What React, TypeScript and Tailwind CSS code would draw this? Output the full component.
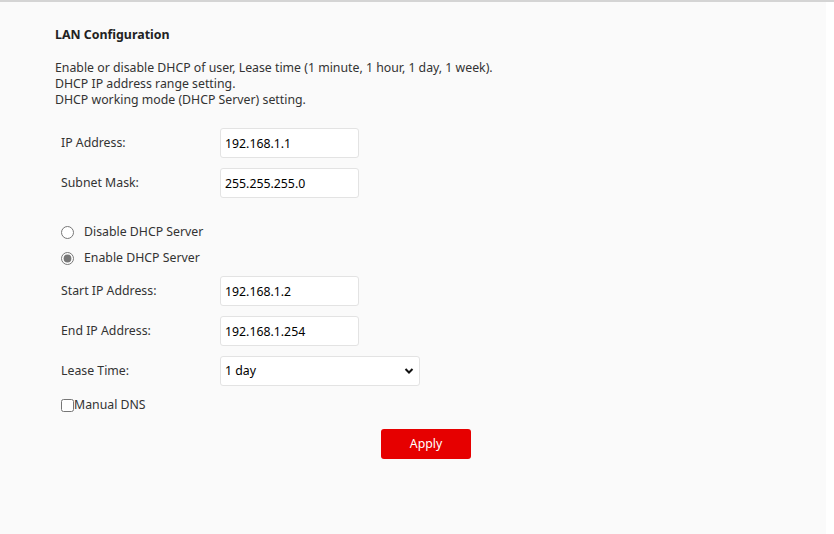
import { useState } from 'react';

const fieldClass =
  "w-[139px] h-[30px] px-[4px] bg-white border border-[#e3e3e3] rounded-[3px] text-[12.3px] text-black outline-none";

const Row = ({ label, value }: { label: string; value: string }) => (
  <div className="flex items-center h-[30px]">
    <span className="w-[165px] pl-[6px] text-[12.3px] text-[#333]">{label}</span>
    <input className={fieldClass} defaultValue={value} />
  </div>
);

export default function App() {
  const [dhcp, setDhcp] = useState<'off' | 'on'>('on');
  const [lease, setLease] = useState('1 day');

  return (
    <div className="w-[834px] h-[534px] bg-white border-t-2 border-[#d4d4d4]" style={{ fontFamily: '"Noto Sans", "Open Sans", sans-serif' }}>
      <div className="w-[826px] h-full bg-[#fafafa] pl-[55px] pt-[23px] text-[#333]">
        <h2 className="text-[12.4px] font-bold text-[#222] leading-[20px]">LAN Configuration</h2>

        <div className="mt-[15px] text-[12.3px] leading-[16px]">
          <p>Enable or disable DHCP of user, Lease time (1 minute, 1 hour, 1 day, 1 week).</p>
          <p>DHCP IP address range setting.</p>
          <p>DHCP working mode (DHCP Server) setting.</p>
        </div>

        <div className="mt-[20px] flex flex-col gap-[10px]">
          <Row label="IP Address:" value="192.168.1.1" />
          <Row label="Subnet Mask:" value="255.255.255.0" />
        </div>

        {/* DHCP mode */}
        <div className="mt-[26px] flex flex-col gap-[10px] pl-[6px]">
          <label className="flex items-center h-[16px] text-[12.3px]">
            <input
              type="radio"
              name="dhcp"
              checked={dhcp === 'off'}
              onChange={() => setDhcp('off')}
              className="w-[13px] h-[13px] m-0 accent-[#777]"
            />
            <span className="ml-[10px]">Disable DHCP Server</span>
          </label>
          <label className="flex items-center h-[16px] text-[12.3px]">
            <input
              type="radio"
              name="dhcp"
              checked={dhcp === 'on'}
              onChange={() => setDhcp('on')}
              className="w-[13px] h-[13px] m-0 accent-[#777]"
            />
            <span className="ml-[10px]">Enable DHCP Server</span>
          </label>
        </div>

        <div className="mt-[10px] flex flex-col gap-[10px]">
          <Row label="Start IP Address:" value="192.168.1.2" />
          <Row label="End IP Address:" value="192.168.1.254" />
          <div className="flex items-center h-[30px]">
            <span className="w-[165px] pl-[6px] text-[12.3px] text-[#333]">Lease Time:</span>
            <div className="relative">
              <select
                value={lease}
                onChange={(e) => setLease(e.target.value)}
                className="appearance-none w-[200px] h-[30px] pl-[4px] bg-white border border-[#e3e3e3] rounded-[3px] text-[12.3px] text-black outline-none"
              >
                <option>1 minute</option>
                <option>1 hour</option>
                <option>1 day</option>
                <option>1 week</option>
              </select>
              <svg className="absolute right-[6px] top-[11px] pointer-events-none" width="10" height="8" viewBox="0 0 10 8">
                <path d="M1.5 2 L5 5.5 L8.5 2" fill="none" stroke="#111" strokeWidth="2" />
              </svg>
            </div>
          </div>
        </div>

        <label className="mt-[11px] ml-[6px] flex items-center h-[16px] text-[12.3px]">
          <input type="checkbox" className="w-[13px] h-[13px] m-0" />
          <span>Manual DNS</span>
        </label>

        <div className="mt-[16px] pl-[326px]">
          <button className="w-[90px] h-[30px] bg-[#e60000] text-white text-[12.3px] rounded-[3px]">
            Apply
          </button>
        </div>
      </div>
    </div>
  );
}
